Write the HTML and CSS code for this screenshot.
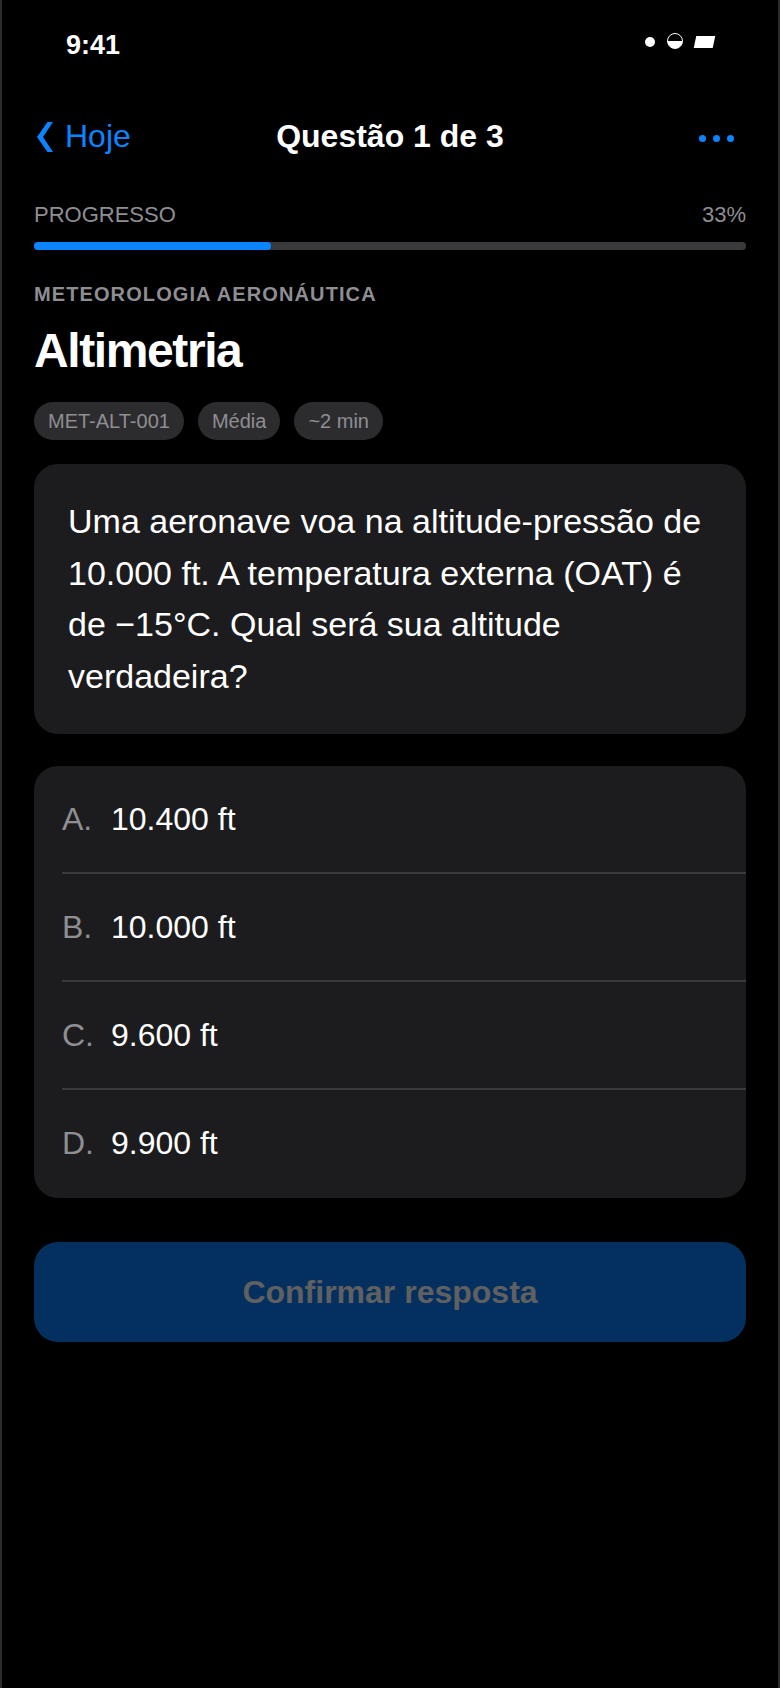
FILE: index.html
```html
<!DOCTYPE html>
<html lang="pt">
<head>
    <meta charset="UTF-8">
    <meta name="viewport" content="width=device-width, initial-scale=1.0">
    <title>Questão 1 de 3</title>
    <link rel="stylesheet" href="styles.css">
</head>
<body>
    <div class="phone">
        <!-- Barra de status -->
        <div class="status-bar">
            <span class="time">9:41</span>
            <div class="status-icons">
                <span class="dot"></span>
                <span class="half"></span>
                <span class="batt"></span>
            </div>
        </div>

        <!-- Navegação -->
        <div class="nav">
            <a class="back">
                <svg class="chevron" width="16" height="30" viewBox="0 0 16 30"><path d="M10.500 0H16L6 15l10 15h-5.500L0 15z" fill="#0a84ff"/></svg>
                Hoje
            </a>
            <div class="nav-title">Questão 1 de 3</div>
            <div class="more"><i></i><i></i><i></i></div>
        </div>

        <div class="content">
            <!-- Progresso -->
            <div class="progress-head">
                <span>PROGRESSO</span>
                <span>33%</span>
            </div>
            <div class="progress"><div class="progress-fill"></div></div>

            <div class="category">METEOROLOGIA AERONÁUTICA</div>
            <h1>Altimetria</h1>

            <div class="chips">
                <span class="chip">MET-ALT-001</span>
                <span class="chip">Média</span>
                <span class="chip">~2 min</span>
            </div>

            <!-- Pergunta -->
            <div class="question">Uma aeronave voa na altitude-pressão de 10.000 ft. A temperatura externa (OAT) é de −15°C. Qual será sua altitude verdadeira?</div>

            <!-- Alternativas -->
            <div class="options">
                <div class="option"><span class="letter">A.</span><span>10.400 ft</span></div>
                <div class="option"><span class="letter">B.</span><span>10.000 ft</span></div>
                <div class="option"><span class="letter">C.</span><span>9.600 ft</span></div>
                <div class="option"><span class="letter">D.</span><span>9.900 ft</span></div>
            </div>

            <button class="confirm">Confirmar resposta</button>
        </div>
    </div>
</body>
</html>
```

FILE: styles.css
```css
* {
    box-sizing: border-box;
}
body {
    margin: 0;
    background-color: #000;
    font-family: "Liberation Sans", Arial, sans-serif;
    color: #fff;
}
.phone {
    width: 780px;
    height: 1688px;
    border-left: 2px solid #2c2c2e;
    border-right: 2px solid #2c2c2e;
    overflow: hidden;
}
.status-bar {
    height: 89px;
    padding: 26px 64px 0 64px;
    display: flex;
    justify-content: space-between;
}
.time {
    font-size: 27px;
    line-height: 39px;
    font-weight: bold;
}
.status-icons {
    display: flex;
    align-items: center;
    gap: 12px;
    height: 32px;
}
.dot {
    width: 10px;
    height: 10px;
    border-radius: 50%;
    background-color: #fff;
}
.half {
    width: 16px;
    height: 16px;
    margin-bottom: 2px;
    border-radius: 50%;
    border: 1px solid #fff;
    background: linear-gradient(to bottom, transparent 50%, #fff 50%);
}
.batt {
    width: 19px;
    height: 12px;
    background-color: #fff;
    transform: skewX(-12deg);
}
.nav {
    height: 95px;
    padding: 0 32px;
    display: flex;
    align-items: center;
    justify-content: space-between;
}
.back {
    display: flex;
    align-items: center;
    gap: 12px;
    width: 160px;
    color: #0a84ff;
    font-size: 32px;
}
.chevron {
    margin-left: 3px;
}
.nav-title {
    font-size: 32px;
    font-weight: bold;
}
.more {
    width: 160px;
    display: flex;
    justify-content: flex-end;
    gap: 7px;
    padding: 3px 12px 0 0;
}
.more i {
    width: 7px;
    height: 7px;
    border-radius: 50%;
    background-color: #0a84ff;
}
.content {
    padding: 18px 32px 0 32px;
}
.progress-head {
    display: flex;
    justify-content: space-between;
    font-size: 22px;
    line-height: 26px;
    color: #8e8e93;
}
.progress {
    margin-top: 14px;
    height: 8px;
    border-radius: 4px;
    background-color: #3a3a3c;
}
.progress-fill {
    width: 33.3%;
    height: 100%;
    border-radius: 4px;
    background-color: #0a84ff;
}
.category {
    margin-top: 30px;
    font-size: 20px;
    line-height: 28px;
    font-weight: bold;
    letter-spacing: 1.100px;
    color: #8e8e93;
}
h1 {
    margin: 14px 0 0 0;
    font-size: 48px;
    line-height: 58px;
    letter-spacing: -1.400px;
}
.chips {
    margin-top: 22px;
    display: flex;
    gap: 14px;
}
.chip {
    height: 38px;
    padding: 0 14px;
    border-radius: 19px;
    background-color: #2c2c2e;
    color: #8e8e93;
    font-size: 20px;
    line-height: 38px;
}
.question {
    margin-top: 24px;
    padding: 32px 34px;
    border-radius: 24px;
    background-color: #1c1c1e;
    font-size: 34px;
    line-height: 51.500px;
}
.options {
    margin-top: 32px;
    border-radius: 24px;
    background-color: #1c1c1e;
    padding-left: 28px;
}
.option {
    height: 108px;
    display: flex;
    align-items: center;
    font-size: 32px;
    border-bottom: 2px solid #3a3a3c;
}
.option:last-child {
    border-bottom: none;
    padding-bottom: 2px;
}
.letter {
    width: 49px;
    color: #8e8e93;
}
.confirm {
    display: block;
    width: 100%;
    height: 100px;
    margin-top: 44px;
    border: none;
    border-radius: 24px;
    background-color: #04305f;
    color: #606060;
    font-family: inherit;
    font-size: 32px;
    font-weight: bold;
}
```
